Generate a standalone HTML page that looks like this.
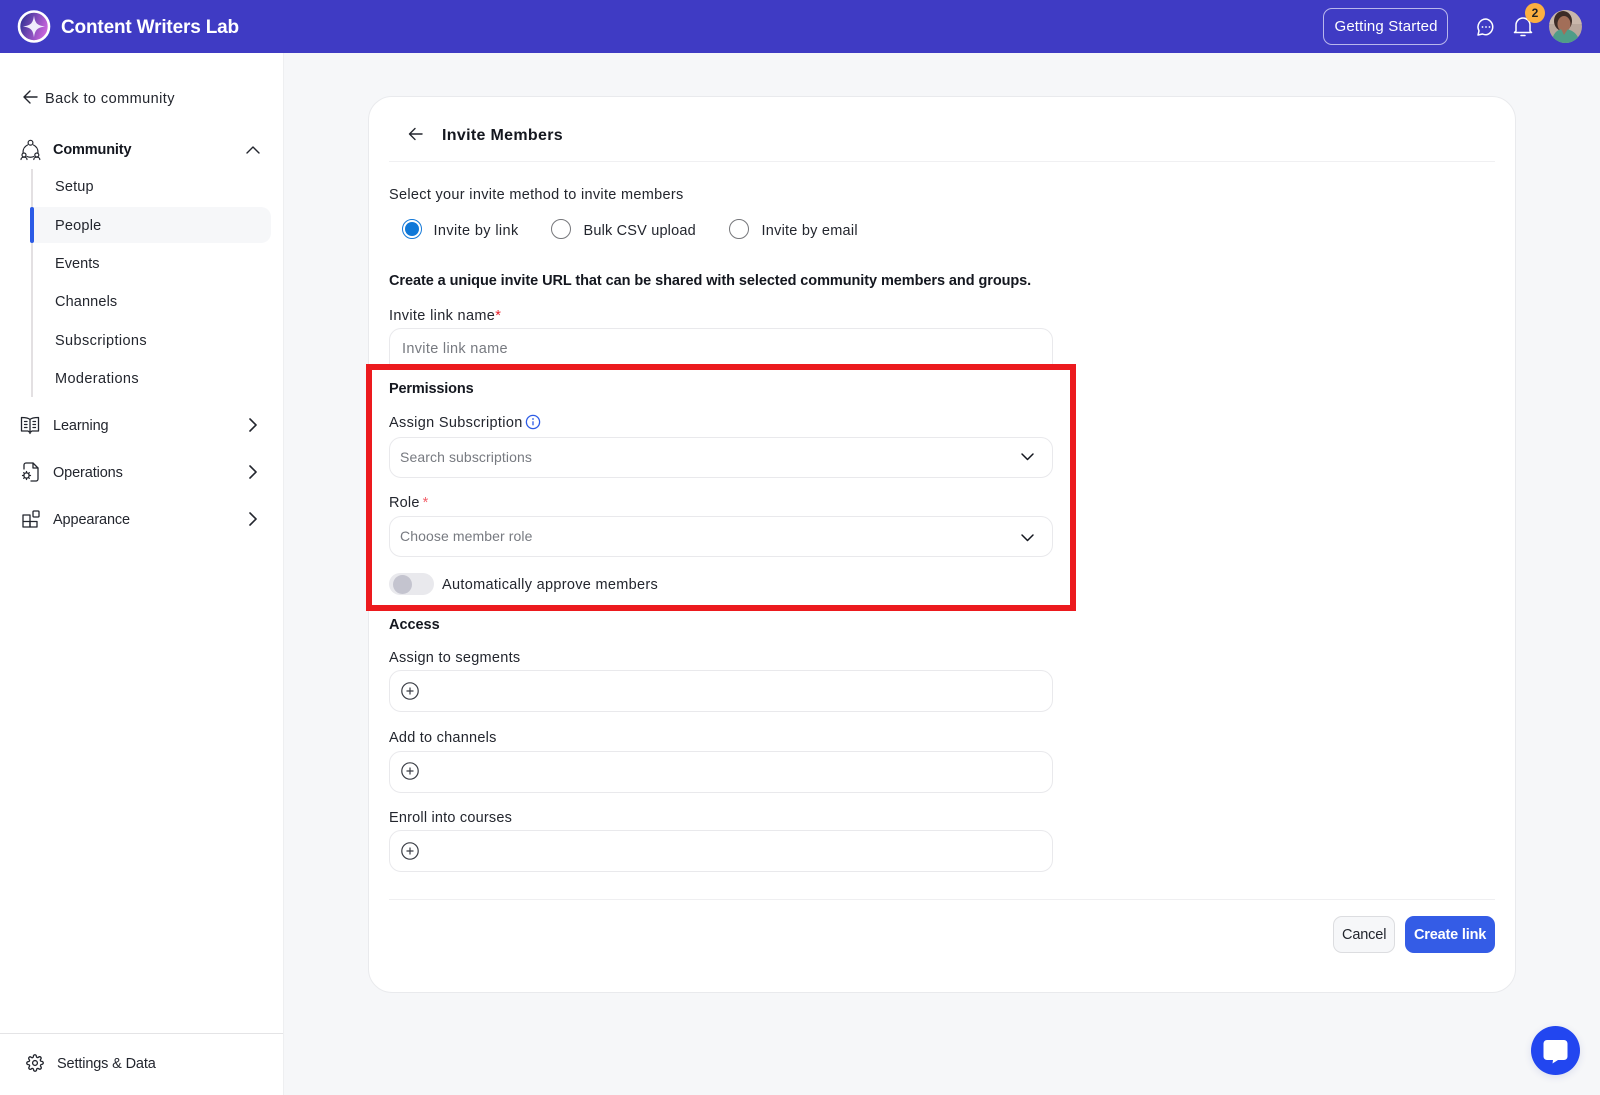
<!DOCTYPE html>
<html><head><meta charset="utf-8"><title>Invite Members</title>
<style>
*{box-sizing:border-box}
html,body{margin:0;padding:0}
body{width:1600px;height:1095px;position:relative;overflow:hidden;background:#f6f7f9;font-family:"Liberation Sans",sans-serif;color:#1d2129}
.t{position:absolute;white-space:nowrap;line-height:20px;height:20px;font-size:14.5px;letter-spacing:.38px;color:#23262e;margin-top:1px}
.b{font-weight:700;color:#14171f;letter-spacing:-.1px}
.box{position:absolute;background:#fff;border:1px solid #e9e9ec;border-radius:12px;left:389px;width:664px}
.ph{color:#777a80}
svg{position:absolute;overflow:visible}
.s{fill:none;stroke:#23262e;stroke-width:1.4;stroke-linecap:round;stroke-linejoin:round}
.radio{position:absolute;width:20px;height:20px;border-radius:50%;border:1.5px solid #76777b;top:219px;background:#fff}
</style></head><body>

<div style="position:absolute;left:0;top:0;width:1600px;height:53px;background:#3f3bc4"></div>
<svg style="left:17px;top:10px" width="34" height="34" viewBox="0 0 34 34"><defs><linearGradient id="g" x1="0" y1="0" x2="1" y2="0.4"><stop offset="0" stop-color="#1c2a8a"/><stop offset="1" stop-color="#c864dc"/></linearGradient></defs><circle cx="17" cy="16.5" r="15" fill="url(#g)" stroke="#fff" stroke-width="2.6"/><path d="M17 5.500C18 13 20 15.500 28 16.500C20 17.500 18 20 17 27.500C16 20 14 17.500 6 16.500C14 15.500 16 13 17 5.500Z" fill="#f0ecfc"/></svg>
<div class="t" style="left:61px;top:16.500px;font-size:19px;font-weight:700;color:#fff;letter-spacing:-.17px">Content Writers Lab</div>
<div style="position:absolute;left:1323px;top:8px;width:125px;height:37px;border:1px solid #b9b7ec;border-radius:9px"></div>
<div class="t" style="left:1334.500px;top:16px;font-size:15px;color:#fff;letter-spacing:.15px">Getting Started</div>
<svg style="left:1476px;top:17px" width="20" height="20" viewBox="0 0 20 20"><path d="M10 2a8 8 0 0 1 0 15.800c-1.300 0-2.500-.3-3.500-.8L2 18l1-4.200A8 8 0 0 1 10 2Z" fill="none" stroke="#fff" stroke-width="1.500" stroke-linejoin="round"/><circle cx="6.500" cy="10" r=".9" fill="#fff"/><circle cx="10" cy="10" r=".9" fill="#fff"/><circle cx="13.500" cy="10" r=".9" fill="#fff"/></svg>
<svg style="left:1513px;top:15px" width="20" height="22" viewBox="0 0 20 22"><path d="M3 16V10a7 7 0 0 1 14 0v6l1.500 1.500h-17Z" fill="none" stroke="#fff" stroke-width="1.500" stroke-linejoin="round"/><path d="M8 20.500h4" stroke="#fff" stroke-width="1.500" stroke-linecap="round"/></svg>
<div style="position:absolute;left:1525px;top:3px;width:20px;height:20px;border-radius:50%;background:#fcb040;color:#222;font-size:12px;font-weight:700;text-align:center;line-height:20px">2</div>
<svg style="left:1549px;top:10px" width="33" height="33" viewBox="0 0 33 33"><defs><clipPath id="av"><circle cx="16.500" cy="16.500" r="16.500"/></clipPath></defs><g clip-path="url(#av)"><rect width="33" height="33" fill="#b9a79c"/><rect x="0" y="0" width="33" height="14" fill="#c9b7ab"/><ellipse cx="14" cy="11" rx="9" ry="10" fill="#3c2b26"/><ellipse cx="15" cy="14" rx="6.500" ry="8" fill="#a26e58"/><path d="M3 33c0-9 5-14 12-14s14 4 16 14Z" fill="#4f9d88"/><path d="M12 19l3 6 4-6Z" fill="#a26e58"/></g></svg>

<div style="position:absolute;left:0;top:53px;width:284px;height:1042px;background:#fff;border-right:1px solid #eeeff1"></div>
<svg style="left:22px;top:89px" width="16" height="16" viewBox="0 0 16 16"><path class="s" d="M15 8H2M8 2 2 8l6 6"/></svg>
<div class="t" style="left:45px;top:88px;letter-spacing:.44px">Back to community</div>

<svg style="left:20px;top:139px" width="21" height="21" viewBox="0 0 21 21"><g class="s" style="stroke-width:1.200"><circle cx="10.500" cy="3.700" r="2.400"/><circle cx="4" cy="16" r="2"/><circle cx="16.800" cy="16" r="2"/><path d="M1 20.500c0-1.500 1.500-2.300 3-2.300s3 .8 3 2.300M13.800 20.500c0-1.500 1.500-2.300 3-2.300s3 .8 3 2.300M7 17.500q3.400 1.500 6.800 0M7.500 6a8 8 0 0 0-4.500 7.500M13.500 6a8 8 0 0 1 4.500 7.500"/></g></svg>
<div class="t b" style="left:53px;top:139px;letter-spacing:-.15px">Community</div>
<svg style="left:245px;top:145px" width="16" height="10" viewBox="0 0 16 10"><path class="s" d="M2 8l6-6 6 6"/></svg>

<div style="position:absolute;left:31px;top:169px;width:2px;height:228px;background:#e3e0e2"></div>
<div style="position:absolute;left:31px;top:207px;width:240px;height:36px;background:#f6f7f9;border-radius:0 10px 10px 0"></div>
<div style="position:absolute;left:30px;top:207px;width:4px;height:36px;background:#2c5be6;border-radius:2px"></div>
<div class="t" style="left:55px;top:176px;letter-spacing:.18px">Setup</div>
<div class="t" style="left:55px;top:214.500px;letter-spacing:.21px">People</div>
<div class="t" style="left:55px;top:253px;letter-spacing:.04px">Events</div>
<div class="t" style="left:55px;top:291px;letter-spacing:.13px">Channels</div>
<div class="t" style="left:55px;top:330px">Subscriptions</div>
<div class="t" style="left:55px;top:368px">Moderations</div>

<svg style="left:20px;top:416px" width="20" height="19" viewBox="0 0 20 19"><g class="s" style="stroke-width:1.300"><path d="M10 3.500C8 1.500 4 1.500 1.500 1.500v13.500H8l2 1.500 2-1.500h6.500V1.500C16 1.500 12 1.500 10 3.500ZM10 3.500v14"/><path d="M4.500 5.500h2.500M4.500 8.500h2.500M4.500 11.500h2.500M13 5.500h2.500M13 8.500h2.500M13 11.500h2.500"/></g></svg>
<div class="t" style="left:53px;top:415px;letter-spacing:-.12px">Learning</div>
<svg style="left:248px;top:417px" width="10" height="16" viewBox="0 0 10 16"><path class="s" style="stroke-width:1.600" d="M2 2l6 6-6 6"/></svg>

<svg style="left:22px;top:462px" width="17" height="20" viewBox="0 0 17 20"><g class="s" style="stroke-width:1.300"><path d="M2 7V3a2 2 0 0 1 2-2h7l5 5v11a2 2 0 0 1-2 2H9"/><path d="M11 1v5h5"/><circle cx="4.500" cy="13.500" r="2.600"/><path d="M4.500 9.500v1.200M4.500 16.300v1.200M.5 13.500h1.200M7.300 13.500h1.200M1.700 10.700l.8.8M6.500 15.500l.8.8M7.300 10.700l-.8.8M1.700 16.300l.8-.8"/></g></svg>
<div class="t" style="left:53px;top:462px;letter-spacing:-.12px">Operations</div>
<svg style="left:248px;top:464px" width="10" height="16" viewBox="0 0 10 16"><path class="s" style="stroke-width:1.600" d="M2 2l6 6-6 6"/></svg>

<svg style="left:22px;top:510px" width="18" height="18" viewBox="0 0 18 18"><g class="s" style="stroke-width:1.300"><path d="M1 5h7v12H1ZM1 11.500h14V17H8"/><path d="M8 11.500V17"/><rect x="11" y="1" width="6" height="6" rx="1"/></g></svg>
<div class="t" style="left:53px;top:508.500px;letter-spacing:-.12px">Appearance</div>
<svg style="left:248px;top:511px" width="10" height="16" viewBox="0 0 10 16"><path class="s" style="stroke-width:1.600" d="M2 2l6 6-6 6"/></svg>

<div style="position:absolute;left:0;top:1033px;width:283px;height:1px;background:#e4e4e6"></div>
<svg style="left:26px;top:1054px" width="18" height="18" viewBox="0 0 24 24"><g class="s" style="stroke-width:1.800"><circle cx="12" cy="12" r="3.200"/><path d="M19.400 15a1.650 1.650 0 0 0 .33 1.820l.06.060a2 2 0 1 1-2.830 2.830l-.06-.060a1.650 1.650 0 0 0-2.800 1.170V21a2 2 0 0 1-4 0v-.090a1.650 1.650 0 0 0-2.880-1.120l-.06.060a2 2 0 1 1-2.830-2.830l.060-.060a1.650 1.650 0 0 0-1.170-2.800H3a2 2 0 0 1 0-4h.090a1.650 1.650 0 0 0 1.120-2.880l-.060-.060a2 2 0 1 1 2.830-2.830l.060.060a1.650 1.650 0 0 0 2.800-1.170V3a2 2 0 0 1 4 0v.090a1.650 1.650 0 0 0 2.880 1.120l.060-.060a2 2 0 1 1 2.830 2.830l-.060.060a1.650 1.650 0 0 0 1.170 2.800H21a2 2 0 0 1 0 4h-.090a1.650 1.650 0 0 0-1.510 1.160Z"/></g></svg>
<div class="t" style="left:57px;top:1053px;letter-spacing:-.14px">Settings &amp; Data</div>

<div style="position:absolute;left:368px;top:96px;width:1148px;height:897px;background:#fff;border:1px solid #e9eaed;border-radius:24px"></div>
<svg style="left:408px;top:127px" width="15" height="14" viewBox="0 0 15 14"><path class="s" d="M14 7H1.500M7 1.500 1.500 7 7 12.500"/></svg>
<div class="t b" style="left:442px;top:124.500px;font-size:16px;letter-spacing:.32px">Invite Members</div>
<div style="position:absolute;left:389px;top:161px;width:1106px;height:1px;background:#f0f0f2"></div>

<div class="t" style="left:389px;top:184px;letter-spacing:.31px">Select your invite method to invite members</div>
<div class="radio" style="left:402px;border:1.500px solid #1479d8"></div>
<div style="position:absolute;left:405px;top:222px;width:14px;height:14px;border-radius:50%;background:#0f78d8"></div>
<div class="t" style="left:433.500px;top:219.500px">Invite by link</div>
<div class="radio" style="left:551px"></div>
<div class="t" style="left:583.500px;top:219.500px;letter-spacing:.18px">Bulk CSV upload</div>
<div class="radio" style="left:728.500px"></div>
<div class="t" style="left:761.500px;top:219.500px;letter-spacing:.24px">Invite by email</div>

<div class="t b" style="left:389px;top:270px;letter-spacing:-.07px">Create a unique invite URL that can be shared with selected community members and groups.</div>
<div class="t" style="left:389px;top:304.500px;letter-spacing:.34px">Invite link name<span style="color:#e8202a">*</span></div>
<div class="box" style="top:328px;height:50px"></div>
<div class="t ph" style="left:402px;top:337.500px;letter-spacing:.32px">Invite link name</div>

<div style="position:absolute;left:366px;top:364px;width:709.500px;height:246.500px;border:6.500px solid #ec1a1e;background:#fff"></div>
<div class="t b" style="left:389px;top:377.500px;letter-spacing:-.16px">Permissions</div>
<div class="t" style="left:389px;top:411.500px;letter-spacing:.33px">Assign Subscription</div>
<svg style="left:525px;top:414px" width="16" height="16" viewBox="0 0 16 16"><circle cx="8" cy="8" r="6.600" fill="none" stroke="#2c5be6" stroke-width="1.300"/><path d="M8 7.300v4" stroke="#2c5be6" stroke-width="1.300"/><circle cx="8" cy="5" r=".9" fill="#2c5be6"/></svg>
<div class="box" style="top:437px;height:41px"></div>
<div class="t ph" style="left:400px;top:446px;font-size:14px;letter-spacing:.1px">Search subscriptions</div>
<svg style="left:1021px;top:453px" width="13" height="8" viewBox="0 0 13 8"><path class="s" style="stroke:#14171f;stroke-width:1.500" d="M1 1l5.500 5.500L12 1"/></svg>
<div class="t" style="left:389px;top:491.500px;letter-spacing:.2px">Role<span style="color:#f2606a;margin-left:3px">*</span></div>
<div class="box" style="top:516px;height:41px"></div>
<div class="t ph" style="left:400px;top:525px;font-size:14px;letter-spacing:.1px">Choose member role</div>
<svg style="left:1021px;top:534px" width="13" height="8" viewBox="0 0 13 8"><path class="s" style="stroke:#14171f;stroke-width:1.500" d="M1 1l5.500 5.500L12 1"/></svg>
<div style="position:absolute;left:389px;top:573px;width:45px;height:22px;border-radius:11px;background:#e9e9ed"></div>
<div style="position:absolute;left:392.500px;top:574.500px;width:19px;height:19px;border-radius:50%;background:#c4c4cf"></div>
<div class="t" style="left:442px;top:574px;letter-spacing:.31px">Automatically approve members</div>

<div class="t b" style="left:389px;top:613.500px;letter-spacing:-.03px">Access</div>
<div class="t" style="left:389px;top:646.500px;letter-spacing:.27px">Assign to segments</div>
<div class="box" style="top:670px;height:42px"></div>
<div class="t" style="left:389px;top:726.500px;letter-spacing:.24px">Add to channels</div>
<div class="box" style="top:751px;height:42px"></div>
<div class="t" style="left:389px;top:806.500px;letter-spacing:.2px">Enroll into courses</div>
<div class="box" style="top:830px;height:42px"></div>
<svg style="left:401px;top:682px" width="18" height="18" viewBox="0 0 18 18"><circle cx="9" cy="9" r="8.200" fill="none" stroke="#3a3d45" stroke-width="1.200"/><path d="M9 5.500v7M5.500 9h7" stroke="#3a3d45" stroke-width="1.200"/></svg>
<svg style="left:401px;top:762px" width="18" height="18" viewBox="0 0 18 18"><circle cx="9" cy="9" r="8.200" fill="none" stroke="#3a3d45" stroke-width="1.200"/><path d="M9 5.500v7M5.500 9h7" stroke="#3a3d45" stroke-width="1.200"/></svg>
<svg style="left:401px;top:842px" width="18" height="18" viewBox="0 0 18 18"><circle cx="9" cy="9" r="8.200" fill="none" stroke="#3a3d45" stroke-width="1.200"/><path d="M9 5.500v7M5.500 9h7" stroke="#3a3d45" stroke-width="1.200"/></svg>

<div style="position:absolute;left:389px;top:899px;width:1106px;height:1px;background:#efeff1"></div>
<div style="position:absolute;left:1333px;top:915.500px;width:62px;height:37px;border:1px solid #dcdde0;border-radius:9px;background:#f6f7f9"></div>
<div class="t" style="left:1342px;top:923.500px;letter-spacing:-.14px">Cancel</div>
<div style="position:absolute;left:1405px;top:915.500px;width:90px;height:37px;border-radius:9px;background:#345ce6"></div>
<div class="t" style="left:1414px;top:923.500px;font-weight:700;color:#fff;letter-spacing:-.18px">Create link</div>

<div style="position:absolute;left:1531px;top:1026px;width:49px;height:49px;border-radius:50%;background:#2246f0;box-shadow:0 2px 8px rgba(30,50,160,.12)"></div>
<svg style="left:1543px;top:1039px" width="25" height="25" viewBox="0 0 25 25"><path d="M4 1h17a3.500 3.500 0 0 1 3.500 3.500V17.500A3.500 3.500 0 0 1 21 21H15l-5.500 3.500.5-3.500H4A3.500 3.500 0 0 1 .5 17.500V4.500A3.500 3.500 0 0 1 4 1Z" fill="#fff"/></svg>
</body></html>
